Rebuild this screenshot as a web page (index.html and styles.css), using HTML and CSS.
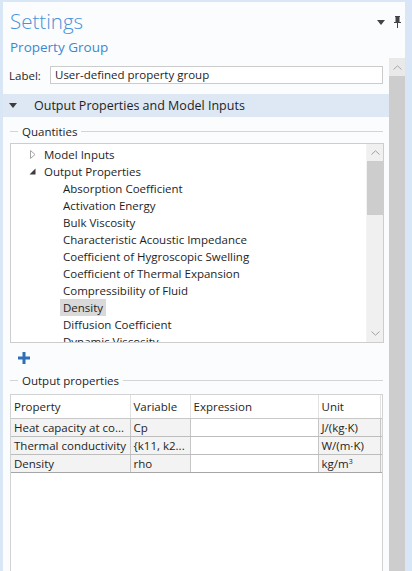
FILE: index.html
```html
<!DOCTYPE html>
<html>
<head>
<meta charset="utf-8">
<link rel="stylesheet" href="styles.css">
</head>
<body>
<div class="window">
  <div class="panel">
    <header class="head">
      <div class="titles">
        <div class="title">Settings</div>
        <div class="subtitle">Property Group</div>
      </div>
      <div class="head-icons">
        <svg class="menu-tri" width="8" height="5" viewBox="0 0 8 5"><path d="M0 0H8L4 5Z" fill="#444"/></svg>
        <svg class="pin" width="7" height="12" viewBox="0 0 7 12"><path d="M1 0H6V1H5.5V6H7V7H4V12H3V7H0V6H1.5V1H1Z" fill="#444"/></svg>
      </div>
    </header>
    <div class="body">
      <div class="content">
        <div class="label-row">
          <span class="label">Label:</span>
          <div class="input">User-defined property group</div>
        </div>
        <div class="section-head">
          <svg class="sec-tri" width="8" height="5" viewBox="0 0 8 5"><path d="M0 0H8L4 5Z" fill="#3c3c3c"/></svg>
          <span>Output Properties and Model Inputs</span>
        </div>
        <div class="legend"><span>Quantities</span></div>
        <div class="tree">
          <div class="tree-list">
            <div class="row lvl0"><svg class="exp" width="8" height="9" viewBox="0 0 8 9"><path d="M1.5 0.5L6 4.5L1.5 8.5Z" fill="none" stroke="#a6a6a6"/></svg><span>Model Inputs</span></div>
            <div class="row lvl0"><svg class="exp" width="8" height="9" viewBox="0 0 8 9"><path d="M6.5 1.5V7.5H0.5Z" fill="#3c3c3c"/></svg><span>Output Properties</span></div>
            <div class="row lvl1"><span>Absorption Coefficient</span></div>
            <div class="row lvl1"><span>Activation Energy</span></div>
            <div class="row lvl1"><span>Bulk Viscosity</span></div>
            <div class="row lvl1"><span>Characteristic Acoustic Impedance</span></div>
            <div class="row lvl1"><span>Coefficient of Hygroscopic Swelling</span></div>
            <div class="row lvl1"><span>Coefficient of Thermal Expansion</span></div>
            <div class="row lvl1"><span>Compressibility of Fluid</span></div>
            <div class="row lvl1"><span class="sel">Density</span></div>
            <div class="row lvl1"><span>Diffusion Coefficient</span></div>
            <div class="row lvl1"><span>Dynamic Viscosity</span></div>
          </div>
          <div class="vscroll">
            <div class="sb-btn"><svg width="9" height="5" viewBox="0 0 9 5"><path d="M0.5 4.5L4.5 0.8L8.5 4.5" fill="none" stroke="#a0a0a0"/></svg></div>
            <div class="sb-thumb"></div>
            <div class="sb-track"></div>
            <div class="sb-btn"><svg width="9" height="5" viewBox="0 0 9 5"><path d="M0.5 0.5L4.5 4.2L8.5 0.5" fill="none" stroke="#a0a0a0"/></svg></div>
          </div>
        </div>
        <div class="toolbar">
          <svg width="12" height="12" viewBox="0 0 12 12"><path d="M4.5 0H7.5V4.5H12V7.5H7.5V12H4.5V7.5H0V4.5H4.5Z" fill="#2f6fb6"/></svg>
        </div>
        <div class="legend"><span>Output properties</span></div>
        <div class="table-box">
          <table class="grid">
            <colgroup><col class="c1"><col class="c2"><col class="c3"><col class="c4"><col class="c5"></colgroup>
            <thead>
              <tr><th>Property</th><th>Variable</th><th>Expression</th><th>Unit</th><th></th></tr>
            </thead>
            <tbody>
              <tr><td class="ro">Heat capacity at co...</td><td class="ro">Cp</td><td></td><td class="ro">J/(kg·K)</td><td class="ro"></td></tr>
              <tr><td class="ro">Thermal conductivity</td><td class="ro">{k11, k2...</td><td></td><td class="ro">W/(m·K)</td><td class="ro"></td></tr>
              <tr><td class="ro">Density</td><td class="ro">rho</td><td></td><td class="ro">kg/m<sup>3</sup></td><td class="ro"></td></tr>
            </tbody>
          </table>
        </div>
      </div>
      <div class="outer-scroll">
        <div class="os-btn"><svg width="9" height="5" viewBox="0 0 9 5"><path d="M0.5 4.5L4.5 0.8L8.5 4.5" fill="none" stroke="#a8a8a8"/></svg></div>
        <div class="os-thumb"></div>
      </div>
    </div>
  </div>
</div>
</body>
</html>
```

FILE: styles.css
```css
* { box-sizing: border-box; }
html, body { margin: 0; padding: 0; }
body {
  font-family: "Segoe UI", "Open Sans", "Noto Sans", sans-serif;
  font-size: 11.5px;
  color: #1e1e1e;
  background: #d8e6f5;
}
.window {
  width: 412px;
  height: 571px;
  padding: 2px 7px 0 3px;
  overflow: hidden;
}
.panel {
  height: 100%;
  background: #fbfcfe;
  display: flex;
  flex-direction: column;
}
.head {
  height: 56px;
  flex: none;
  display: flex;
  justify-content: space-between;
  padding: 0 4px 0 7px;
}
.title {
  font-size: 20.5px;
  font-weight: 300;
  color: #4793d8;
  line-height: 26px;
  margin-top: 6px;
}
.subtitle {
  font-size: 13.5px;
  color: #3c88cf;
  line-height: 18px;
  margin-top: 4px;
}
.head-icons {
  display: flex;
  align-items: center;
  gap: 9px;
  height: 12px;
  margin-top: 14px;
}
.body {
  flex: 1;
  display: flex;
  min-height: 0;
}
.content {
  flex: 1;
  min-width: 0;
  display: flex;
  flex-direction: column;
}
.label-row {
  display: flex;
  align-items: center;
  padding: 0 6px 0 6px;
  margin-top: 8px;
  height: 18px;
}
.label { width: 41px; }
.input {
  flex: 1;
  height: 18px;
  border: 1px solid #cbcbcb;
  background: #fff;
  padding: 0 4px;
  line-height: 16px;
}
.section-head {
  margin-top: 10px;
  height: 23px;
  background: #dde8f4;
  display: flex;
  align-items: center;
  font-size: 12.5px;
  color: #1e1e1e;
}
.sec-tri { margin: 0 17px 0 6px; }
.legend {
  margin: 7px 6px 0 7px;
  height: 14px;
  display: flex;
  align-items: center;
}
.legend::before {
  content: "";
  width: 8px;
  border-top: 1px solid #d4d4d4;
  margin-right: 4px;
}
.legend::after {
  content: "";
  flex: 1;
  border-top: 1px solid #d4d4d4;
  margin-left: 4px;
}
.tree {
  margin: 5px 5px 0 7px;
  height: 200px;
  border: 1px solid #cdcdcd;
  background: #fff;
  display: flex;
  overflow: hidden;
}
.tree-list {
  flex: 1;
  padding-top: 2px;
  overflow: hidden;
}
.row {
  height: 17px;
  display: flex;
  align-items: center;
  white-space: nowrap;
}
.row.lvl0 { padding-left: 18px; }
.row.lvl0 .exp { margin-right: 4px; }
.row.lvl1 { padding-left: 49px; }
.row span { padding: 0 3px; line-height: 17px; }
.row .sel { background: #d9d9d9; }
.vscroll {
  width: 17px;
  flex: none;
  display: flex;
  flex-direction: column;
  background: #f0f0f0;
  border-left: 1px solid #f4f4f4;
}
.sb-btn {
  height: 17px;
  flex: none;
  display: flex;
  align-items: center;
  justify-content: center;
}
.sb-thumb {
  height: 54px;
  background: #cdcdcd;
  flex: none;
}
.sb-track { flex: 1; }
.toolbar {
  height: 23px;
  padding: 9px 0 0 15px;
}
.toolbar svg { display: block; }
.table-box {
  margin: 7px 6px 0 7px;
  flex: 1;
  border: 1px solid #d2d2d2;
  border-bottom: none;
  background: #fff;
  overflow: hidden;
}
.grid {
  width: 373px;
  border-collapse: collapse;
  table-layout: fixed;
}
.c1 { width: 119px; }
.c2 { width: 60px; }
.c3 { width: 128px; }
.c4 { width: 62px; }
.c5 { width: 4px; }
.grid th {
  height: 23px;
  font-weight: normal;
  text-align: left;
  padding: 0 3px;
  border-right: 1px solid #e2e2e2;
  border-bottom: 1px solid #c8c8c8;
  background: #fff;
}
.grid td {
  height: 18px;
  padding: 0 3px;
  white-space: nowrap;
  overflow: hidden;
  border-right: 1px solid #c6c6c6;
  border-bottom: 1px solid #bdbdbd;
}
.grid tbody tr:last-child td { border-bottom-color: #a6a6a6; }
.grid td.ro { background: #f3f3f3; }
.grid sup { font-size: 7px; vertical-align: 4px; line-height: 0; }
.outer-scroll {
  width: 16px;
  flex: none;
  display: flex;
  flex-direction: column;
}
.os-btn {
  height: 18px;
  background: #e9e9e9;
  display: flex;
  align-items: center;
  justify-content: center;
}
.os-thumb {
  flex: 1;
  background: #cdcdcd;
}
```
